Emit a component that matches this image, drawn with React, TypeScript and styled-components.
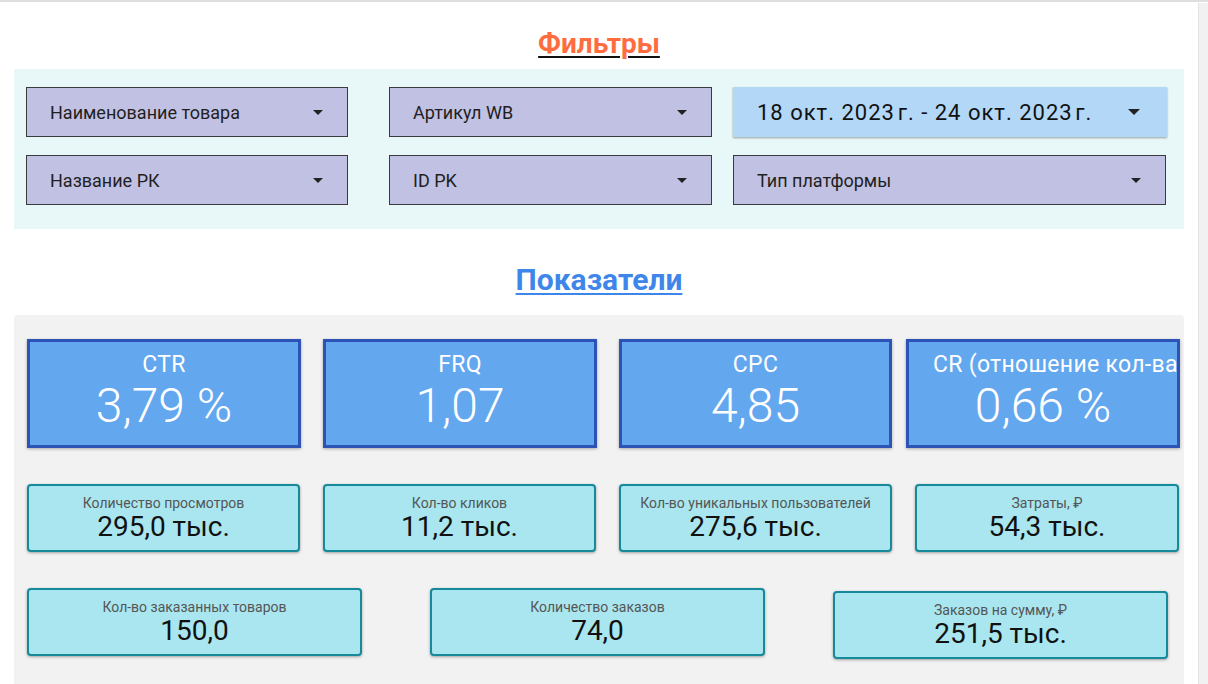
import styled, { createGlobalStyle } from 'styled-components'

/**
 * Data
 */
const kpis = [
  { label: 'CTR', value: '3,79 %', width: 274, gap: 0 },
  { label: 'FRQ', value: '1,07', width: 274, gap: 22 },
  { label: 'CPC', value: '4,85', width: 273, gap: 22 },
  { label: 'CR (отношение кол-ва заказов к кликам)', value: '0,66 %', width: 274, gap: 14 },
]

const statsTop = [
  { label: 'Количество просмотров', value: '295,0 тыс.', width: 273, gap: 0, dy: 0 },
  { label: 'Кол-во кликов', value: '11,2 тыс.', width: 273, gap: 23, dy: 0 },
  { label: 'Кол-во уникальных пользователей', value: '275,6 тыс.', width: 273, gap: 23, dy: 0 },
  { label: 'Затраты, ₽', value: '54,3 тыс.', width: 264, gap: 23, dy: 0 },
]

const statsBottom = [
  { label: 'Кол-во заказанных товаров', value: '150,0', width: 335, gap: 0, dy: 0 },
  { label: 'Количество заказов', value: '74,0', width: 335, gap: 68, dy: 0 },
  { label: 'Заказов на сумму, ₽', value: '251,5 тыс.', width: 335, gap: 68, dy: 3 },
]

/**
 * Component
 */
const App = () => {
  return (
    <Page>
      <GlobalStyle />
      <Main>
        <SectionTitle $color='#ff6d3f' $line='#111' $size={28}>Фильтры</SectionTitle>
        <FilterPanel>
          <FilterRow>
            <Select $width={322} $gap={0}>
              <span>Наименование товара</span>
              <Caret />
            </Select>
            <Select $width={323} $gap={41}>
              <span>Артикул WB</span>
              <Caret />
            </Select>
            <DatePicker>
              <span>18 окт. 2023{'\u202F'}г. - 24 окт. 2023{'\u202F'}г.</span>
              <Caret $big />
            </DatePicker>
          </FilterRow>
          <FilterRow>
            <Select $width={322} $gap={0}>
              <span>Название РК</span>
              <Caret />
            </Select>
            <Select $width={323} $gap={41}>
              <span>ID PK</span>
              <Caret />
            </Select>
            <Select $width={433} $gap={21}>
              <span>Тип платформы</span>
              <Caret />
            </Select>
          </FilterRow>
        </FilterPanel>

        <SectionTitle $color='#3f86ea' $line='#3f86ea' $size={30}>Показатели</SectionTitle>
        <MetricsPanel>
          <CardRow>
            {kpis.map((k) => (
              <KpiCard key={k.label} $width={k.width} $gap={k.gap}>
                <KpiLabel>{k.label}</KpiLabel>
                <KpiValue>{k.value}</KpiValue>
              </KpiCard>
            ))}
          </CardRow>
          <CardRow>
            {statsTop.map((s) => (
              <StatCard key={s.label} $width={s.width} $gap={s.gap} $dy={s.dy}>
                <StatLabel>{s.label}</StatLabel>
                <StatValue>{s.value}</StatValue>
              </StatCard>
            ))}
          </CardRow>
          <CardRow>
            {statsBottom.map((s) => (
              <StatCard key={s.label} $width={s.width} $gap={s.gap} $dy={s.dy}>
                <StatLabel>{s.label}</StatLabel>
                <StatValue>{s.value}</StatValue>
              </StatCard>
            ))}
          </CardRow>
        </MetricsPanel>
      </Main>
      <ScrollTrack />
    </Page>
  )
}

/**
 * Styled Component
 */
const GlobalStyle = createGlobalStyle`
  html, body {
    margin: 0;
    padding: 0;
    background: #fff;
    font-family: Roboto, 'Noto Sans', sans-serif;
    overflow: hidden;
  }
`

const Page = styled.div`
  display: flex;
  width: 1208px;
  height: 684px;
  overflow: hidden;
  border-top: 2px solid #dedede;
  box-sizing: border-box;
`

const Main = styled.div`
  width: 1199px;
  display: flex;
  flex-direction: column;
  padding: 0 14px;
  box-sizing: border-box;
`

const ScrollTrack = styled.div`
  width: 9px;
  background: #f1f1f1;
  border-left: 1px solid #e3e3e3;
  margin-top: 1px;
`

const SectionTitle = styled.h2<{ $color: string, $line: string, $size: number }>`
  margin: 27px 0 10px;
  height: 30px;
  line-height: 30px;
  text-align: center;
  font-size: ${(p) => p.$size}px;
  font-weight: 700;
  color: ${(p) => p.$color};
  text-decoration: underline;
  text-decoration-color: ${(p) => p.$line};
  text-decoration-thickness: 2px;
  text-underline-offset: 3px;

  & + div + & {
    margin: 36px 0 20px;
  }
`

const FilterPanel = styled.div`
  background: #e8f7f8;
  padding: 18px 0 24px 12px;
  display: flex;
  flex-direction: column;
  gap: 18px;
`

const FilterRow = styled.div`
  display: flex;
  height: 50px;
`

const Select = styled.div<{ $width: number, $gap: number }>`
  width: ${(p) => p.$width}px;
  margin-left: ${(p) => p.$gap}px;
  box-sizing: border-box;
  background: #c1c1e3;
  border: 1px solid #3a3a3a;
  display: flex;
  align-items: center;
  justify-content: space-between;
  padding: 0 24px 0 23px;
  font-size: 18px;
  color: #1f1f1f;
`

const DatePicker = styled.div`
  width: 434px;
  margin-left: 21px;
  box-sizing: border-box;
  background: #b3d7f7;
  box-shadow: 0 1px 2px rgba(0, 0, 0, 0.35);
  display: flex;
  align-items: center;
  justify-content: space-between;
  padding: 0 27px 0 24px;
  font-size: 22px;
  letter-spacing: 1px;
  color: #111;
`

const Caret = styled.span<{ $big?: boolean }>`
  width: 0;
  height: 0;
  border-left: ${(p) => (p.$big ? 6 : 5)}px solid transparent;
  border-right: ${(p) => (p.$big ? 6 : 5)}px solid transparent;
  border-top: ${(p) => (p.$big ? 6 : 5)}px solid #222;
`

const MetricsPanel = styled.div`
  flex: 1;
  background: #f2f2f2;
  border-radius: 4px 4px 0 0;
  padding: 24px 0 40px 13px;
  display: flex;
  flex-direction: column;
  gap: 36px;
`

const CardRow = styled.div`
  display: flex;
  align-items: flex-start;
`

const KpiCard = styled.div<{ $width: number, $gap: number }>`
  width: ${(p) => p.$width}px;
  margin-left: ${(p) => p.$gap}px;
  height: 109px;
  box-sizing: border-box;
  background: #63a7ef;
  border: 3px solid #2d53b7;
  box-shadow: 0 1px 3px rgba(0, 0, 0, 0.3);
  overflow: hidden;
  display: flex;
  flex-direction: column;
  align-items: stretch;
  padding-top: 10px;
  color: #fff;
`

const KpiLabel = styled.div`
  font-size: 23px;
  line-height: 26px;
  padding: 0 24px;
  letter-spacing: 0.3px;
  white-space: nowrap;
  text-align: center;
`

const KpiValue = styled.div`
  font-size: 48px;
  font-weight: 300;
  line-height: 56px;
  text-align: center;
`

const StatCard = styled.div<{ $width: number, $gap: number, $dy: number }>`
  width: ${(p) => p.$width}px;
  margin-left: ${(p) => p.$gap}px;
  margin-top: ${(p) => p.$dy}px;
  height: 68px;
  box-sizing: border-box;
  background: #a9e6ef;
  border: 2px solid #16899a;
  border-radius: 4px;
  box-shadow: 0 1px 3px rgba(0, 0, 0, 0.35);
  display: flex;
  flex-direction: column;
  align-items: center;
  padding-top: 9px;
`

const StatLabel = styled.div`
  font-size: 14px;
  line-height: 16px;
  color: #555;
  white-space: nowrap;
`

const StatValue = styled.div`
  font-size: 28px;
  line-height: 32px;
  color: #111;
`

export default App
